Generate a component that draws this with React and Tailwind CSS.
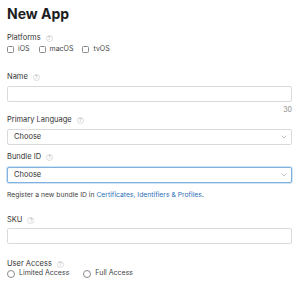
import { ChevronDown } from 'lucide-react'

function Help() {
  return (
    <span className="ml-[5px] inline-flex h-[7px] w-[7px] items-center justify-center rounded-full border border-[#dcdcdc] text-[5px] leading-none text-[#b0b0b0]">
      ?
    </span>
  )
}

function Label({ children }) {
  return (
    <div className="flex items-center h-[10px] text-[7.5px] leading-[10px] text-[#333]">
      {children}
      <Help />
    </div>
  )
}

function Check({ label }) {
  return (
    <label className="flex items-center gap-[4px] mr-[9px]">
      <span className="h-[7px] w-[7px] rounded-[1.5px] border border-[#8a8a8a] bg-white" />
      <span>{label}</span>
    </label>
  )
}

function Radio({ label }) {
  return (
    <label className="flex items-center gap-[4px] mr-[14px]">
      <span className="h-[8px] w-[8px] rounded-full border border-[#8a8a8a] bg-white" />
      <span>{label}</span>
    </label>
  )
}

function Select({ focused }) {
  return (
    <div
      className={`flex items-center justify-between h-[16px] pl-[6px] pr-[3px] rounded-[2px] border bg-white text-[7.5px] text-[#333] ${
        focused ? 'border-[#7fb2e0] shadow-[0_0_0_1px_rgba(127,178,224,0.35)]' : 'border-[#dadada]'
      }`}
    >
      <span>Choose</span>
      <ChevronDown size={8} strokeWidth={1.5} className="text-[#888]" />
    </div>
  )
}

export default function App() {
  return (
    <div className="w-[300px] h-[285px] bg-white pl-[7px] pr-[8px] pt-[5px] overflow-hidden font-['Inter',sans-serif] text-[#333]">
      <h1 className="text-[14px] leading-[18px] font-bold text-[#1d1d1f]">New App</h1>

      <div className="mt-[10px]">
        <Label>Platforms</Label>
        <div className="flex items-center h-[10px] mt-[1px] text-[7px] text-[#444]">
          <Check label="iOS" />
          <Check label="macOS" />
          <Check label="tvOS" />
        </div>
      </div>

      <div className="mt-[18px]">
        <Label>Name</Label>
        <div className="mt-[4px] h-[16px] rounded-[2px] border border-[#dadada] bg-white" />
        <div className="h-[10px] mt-[3px] text-right text-[7px] leading-[10px] text-[#888]">30</div>
      </div>

      <div>
        <Label>Primary Language</Label>
        <div className="mt-[4px]">
          <Select />
        </div>
      </div>

      <div className="mt-[7px]">
        <Label>Bundle ID</Label>
        <div className="mt-[5px]">
          <Select focused />
        </div>
        <p className="mt-[7px] h-[10px] text-[6.8px] leading-[10px] text-[#444]">
          Register a new bundle ID in{' '}
          <span className="text-[#2d6fb8]">Certificates, Identifiers &amp; Profiles</span>.
        </p>
      </div>

      <div className="mt-[15px]">
        <Label>SKU</Label>
        <div className="mt-[3px] h-[16px] rounded-[2px] border border-[#dadada] bg-white" />
      </div>

      <div className="mt-[15px]">
        <Label>User Access</Label>
        <div className="flex items-center h-[9px] text-[7px] text-[#444]">
          <Radio label="Limited Access" />
          <Radio label="Full Access" />
        </div>
      </div>
    </div>
  )
}
